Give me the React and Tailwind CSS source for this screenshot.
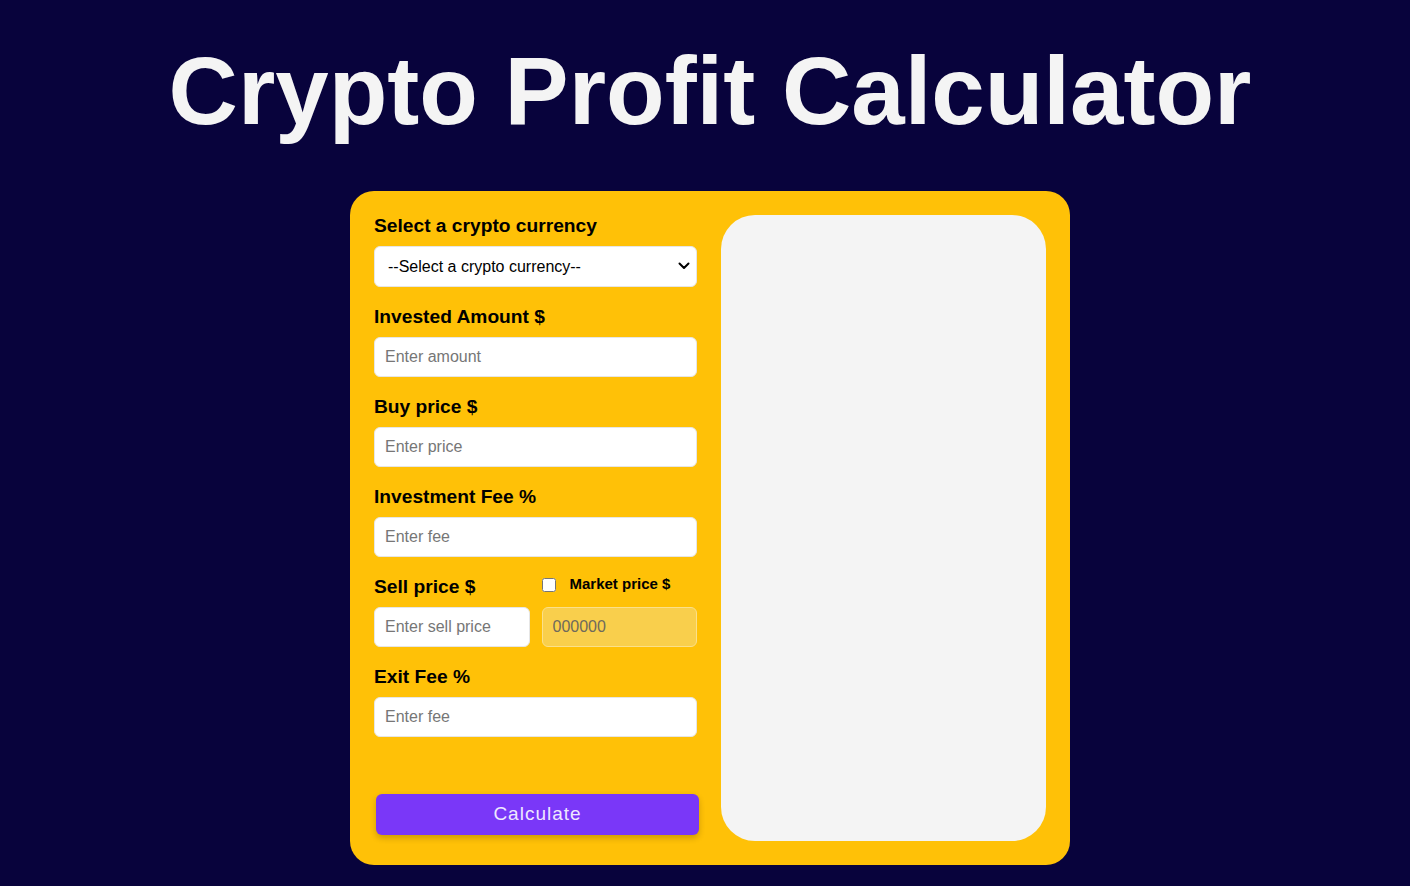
import React, { useState } from 'react';

const Field = ({ label, placeholder }) => (
  <div className="mb-[19px]">
    <label className="block text-[19.2px] font-bold leading-[21px] text-black mb-[10px]">{label}</label>
    <input
      type="text"
      placeholder={placeholder}
      className="w-full h-10 px-[10px] bg-white border border-[#e6e6e6] rounded-md text-base text-black placeholder-[#767676] outline-none"
    />
  </div>
);

export default function App() {
  const [useMarket, setUseMarket] = useState(false);

  return (
    <div className="min-h-[886px] bg-[#08033c] flex flex-col items-center pt-[36px] pl-[10px] font-['Liberation_Sans',Arial,sans-serif]">
      <h1 className="text-[96px] font-bold leading-[110px] text-[#f4f4f4]">Crypto Profit Calculator</h1>

      <div className="mt-[45px] w-[720px] h-[674px] bg-[#ffc107] rounded-3xl p-6 flex gap-6">
        {/* form column */}
        <div className="w-[323px] flex flex-col">
          <div className="mb-[19px]">
            <label className="block text-[19.2px] font-bold leading-[21px] text-black mb-[10px]">Select a crypto currency</label>
            <div className="relative">
              <select className="appearance-none w-full h-[41px] pl-[13px] pr-8 bg-white border border-[#e6e6e6] rounded-md text-base text-black outline-none">
                <option>--Select a crypto currency--</option>
                <option>Bitcoin</option>
                <option>Ethereum</option>
              </select>
              <svg
                className="absolute right-[7px] top-[16px] pointer-events-none"
                width="12"
                height="8"
                viewBox="0 0 12 8"
                fill="none"
              >
                <path d="M1.5 1.5 L6 6 L10.5 1.5" stroke="#000" strokeWidth="2" strokeLinecap="round" strokeLinejoin="round" />
              </svg>
            </div>
          </div>

          <Field label="Invested Amount $" placeholder="Enter amount" />
          <Field label="Buy price $" placeholder="Enter price" />
          <Field label="Investment Fee %" placeholder="Enter fee" />

          <div className="mb-[19px] flex gap-3">
            <div className="flex-1">
              <label className="block text-[19.2px] font-bold leading-[21px] text-black mb-[10px]">Sell price $</label>
              <input
                type="text"
                placeholder="Enter sell price"
                className="w-full h-10 px-[10px] bg-white border border-[#e6e6e6] rounded-md text-base text-black placeholder-[#767676] outline-none"
              />
            </div>
            <div className="flex-1">
              <div className="flex items-center h-[21px] mb-[10px] -translate-y-[2px]">
                <input
                  type="checkbox"
                  checked={useMarket}
                  onChange={(e) => setUseMarket(e.target.checked)}
                  className="w-[14px] h-[14px] m-0"
                />
                <span className="ml-[14px] text-[15px] font-bold text-black">Market price $</span>
              </div>
              <input
                type="text"
                disabled={!useMarket}
                placeholder="000000"
                className="w-full h-10 px-[10px] bg-[#f9cf4c] border border-[#fbe08a] rounded-md text-base text-black placeholder-[#6f6a5c] outline-none"
              />
            </div>
          </div>

          <Field label="Exit Fee %" placeholder="Enter fee" />

          <button className="mt-auto mb-[6px] ml-[2px] w-[323px] h-[41px] bg-[#7a37f8] rounded-md text-[19px] text-[#eee8ff] tracking-[1px] shadow-[0_3px_6px_rgba(0,0,0,0.2)]">
            Calculate
          </button>
        </div>

        {/* result panel */}
        <div className="flex-1 bg-[#f4f4f4] rounded-[34px]"></div>
      </div>
    </div>
  );
}
